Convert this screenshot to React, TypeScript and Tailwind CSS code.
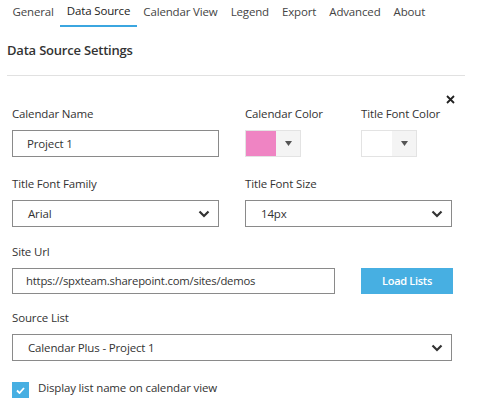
import React from 'react';

const tabs = ['General', 'Data Source', 'Calendar View', 'Legend', 'Export', 'Advanced', 'About'];

const Chevron: React.FC = () => (
  <svg width="12" height="8" viewBox="0 0 12 8" className="shrink-0">
    <polyline points="1.5,1.5 6,6 10.5,1.5" fill="none" stroke="#333" strokeWidth="2.2" />
  </svg>
);

const Select: React.FC<{ value: string; className?: string }> = ({ value, className = '' }) => (
  <div className={`h-[27px] border border-[#8a8a8a] bg-white flex items-center justify-between pl-[15px] pr-[8px] text-[11.5px] tracking-[-0.15px] text-[#333] ${className}`}>
    <span>{value}</span>
    <Chevron />
  </div>
);

const Swatch: React.FC<{ color: string }> = ({ color }) => (
  <div className="h-[27px] w-[56px] flex border border-[#e3e3e3]">
    <div className="w-[30px] h-full" style={{ background: color }} />
    <div className="flex-1 bg-[#f4f4f4] flex items-center justify-center">
      <svg width="7" height="5" viewBox="0 0 7 5">
        <polygon points="0,0 7,0 3.5,5" fill="#555" />
      </svg>
    </div>
  </div>
);

const Label: React.FC<{ children: React.ReactNode }> = ({ children }) => (
  <div className="text-[11.5px] tracking-[-0.15px] leading-[16px] text-[#333] mb-[8px]">{children}</div>
);

const App: React.FC = () => {
  return (
    <div className="w-[480px] h-[411px] bg-white overflow-hidden text-[#333]" style={{ fontFamily: '"Open Sans", "Noto Sans", sans-serif' }}>
      {/* tabs */}
      <div className="flex pl-[6px] h-[27px] text-[11.5px] tracking-[-0.15px]">
        {tabs.map((t) => (
          <div
            key={t}
            className={`px-[6.5px] h-full flex items-center pb-[4px] ${t === 'Data Source' ? 'border-b-2 border-[#3ba6e0] text-[#222]' : 'text-[#444]'}`}
          >
            {t}
          </div>
        ))}
      </div>

      <div className="mt-[13px] pl-[7px] text-[13px] tracking-[-0.2px] leading-[20px] font-semibold text-[#333]">Data Source Settings</div>
      <div className="mt-[15px] ml-[7px] w-[458px] border-t border-[#e1e1e1]" />

      <div className="flex justify-end pr-[25px] h-[30px] pt-[19px]">
        <svg width="9" height="9" viewBox="0 0 9 9">
          <path d="M1 1 L8 8 M8 1 L1 8" stroke="#222" strokeWidth="1.8" />
        </svg>
      </div>

      <div className="pl-[12px]">
        {/* row 1 */}
        <div className="flex">
          <div className="w-[207px]">
            <Label>Calendar Name</Label>
            <div className="h-[27px] border border-[#8a8a8a] flex items-center pl-[14px] text-[11.5px] tracking-[-0.15px]">Project 1</div>
          </div>
          <div className="ml-[26px] w-[116px]">
            <Label>Calendar Color</Label>
            <Swatch color="#ef84c3" />
          </div>
          <div>
            <Label>Title Font Color</Label>
            <Swatch color="#ffffff" />
          </div>
        </div>

        {/* row 2 */}
        <div className="flex mt-[19px]">
          <div className="w-[207px]">
            <Label>Title Font Family</Label>
            <Select value="Arial" />
          </div>
          <div className="ml-[26px] w-[207px]">
            <Label>Title Font Size</Label>
            <Select value="14px" />
          </div>
        </div>

        {/* row 3 */}
        <div className="mt-[17px]">
          <Label>Site Url</Label>
          <div className="flex">
            <div className="w-[323px] h-[26px] border border-[#8a8a8a] flex items-center pl-[13px] text-[11.3px] tracking-[-0.2px]">
              https://spxteam.sharepoint.com/sites/demos
            </div>
            <button className="ml-[26px] w-[92px] h-[26px] bg-[#47afe2] text-white text-[11px] tracking-[-0.3px] font-semibold">Load Lists</button>
          </div>
        </div>

        {/* row 4 */}
        <div className="mt-[16px]">
          <Label>Source List</Label>
          <Select value="Calendar Plus - Project 1" className="w-[440px]" />
        </div>

        {/* checkbox */}
        <div className="mt-[21px] flex items-start">
          <div className="w-[17px] h-[16px] bg-[#47afe2] flex items-center justify-center">
            <svg width="9" height="7" viewBox="0 0 9 7">
              <polyline points="1,3.5 3.5,6 8,1" fill="none" stroke="#fff" strokeWidth="1.8" />
            </svg>
          </div>
          <span className="ml-[9px] text-[11.5px] tracking-[-0.15px] leading-[14px] -mt-[1px]">Display list name on calendar view</span>
        </div>
      </div>
    </div>
  );
};

export default App;
